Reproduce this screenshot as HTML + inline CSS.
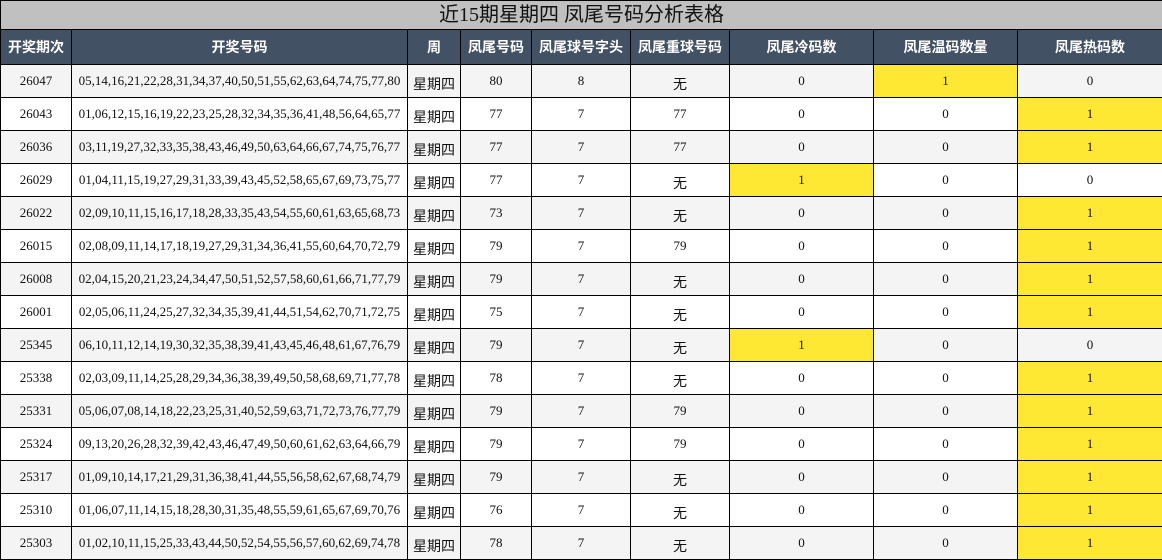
<!DOCTYPE html>
<html><head><meta charset="utf-8"><style>
html,body{margin:0;padding:0;background:#fff;}
table{border-collapse:collapse;table-layout:fixed;width:1162px;font-family:"Liberation Serif","Noto Serif CJK SC",serif;font-size:13px;color:#111;}
td,th{border:1px solid #000;text-align:center;padding:0;overflow:hidden;white-space:nowrap;line-height:16px;}
.title td{height:28px;background:#c0c0c0;font-family:"Liberation Serif","Noto Sans CJK SC",serif;font-size:20px;line-height:24px;color:#111;}
.hd th{height:34px;background:#435165;color:#fff;font-family:"Liberation Sans","Noto Sans CJK SC",sans-serif;font-size:14px;font-weight:bold;}
tr.r td{height:32px;}
tr.r:nth-child(odd) td{background:#f4f4f4;}
tr.r:nth-child(even) td{background:#fff;}
tr.r td.y{background:#ffe834;}
.cj span{font-family:"Noto Sans CJK SC",sans-serif;font-size:14px;position:relative;top:3px;}
</style></head><body>
<table>
<colgroup><col style="width:71px"><col style="width:336px"><col style="width:53px"><col style="width:71px"><col style="width:99px"><col style="width:99px"><col style="width:144px"><col style="width:144px"><col style="width:145px"></colgroup>
<tr class="title"><td colspan="9">近15期星期四 凤尾号码分析表格</td></tr>
<tr class="hd"><th>开奖期次</th><th>开奖号码</th><th>周</th><th>凤尾号码</th><th>凤尾球号字头</th><th>凤尾重球号码</th><th>凤尾冷码数</th><th>凤尾温码数量</th><th>凤尾热码数</th></tr>
<tr class="r"><td>26047</td><td>05,14,16,21,22,28,31,34,37,40,50,51,55,62,63,64,74,75,77,80</td><td class="cj"><span>星期四</span></td><td>80</td><td>8</td><td class="cj"><span>无</span></td><td>0</td><td class="y">1</td><td>0</td></tr>
<tr class="r"><td>26043</td><td>01,06,12,15,16,19,22,23,25,28,32,34,35,36,41,48,56,64,65,77</td><td class="cj"><span>星期四</span></td><td>77</td><td>7</td><td>77</td><td>0</td><td>0</td><td class="y">1</td></tr>
<tr class="r"><td>26036</td><td>03,11,19,27,32,33,35,38,43,46,49,50,63,64,66,67,74,75,76,77</td><td class="cj"><span>星期四</span></td><td>77</td><td>7</td><td>77</td><td>0</td><td>0</td><td class="y">1</td></tr>
<tr class="r"><td>26029</td><td>01,04,11,15,19,27,29,31,33,39,43,45,52,58,65,67,69,73,75,77</td><td class="cj"><span>星期四</span></td><td>77</td><td>7</td><td class="cj"><span>无</span></td><td class="y">1</td><td>0</td><td>0</td></tr>
<tr class="r"><td>26022</td><td>02,09,10,11,15,16,17,18,28,33,35,43,54,55,60,61,63,65,68,73</td><td class="cj"><span>星期四</span></td><td>73</td><td>7</td><td class="cj"><span>无</span></td><td>0</td><td>0</td><td class="y">1</td></tr>
<tr class="r"><td>26015</td><td>02,08,09,11,14,17,18,19,27,29,31,34,36,41,55,60,64,70,72,79</td><td class="cj"><span>星期四</span></td><td>79</td><td>7</td><td>79</td><td>0</td><td>0</td><td class="y">1</td></tr>
<tr class="r"><td>26008</td><td>02,04,15,20,21,23,24,34,47,50,51,52,57,58,60,61,66,71,77,79</td><td class="cj"><span>星期四</span></td><td>79</td><td>7</td><td class="cj"><span>无</span></td><td>0</td><td>0</td><td class="y">1</td></tr>
<tr class="r"><td>26001</td><td>02,05,06,11,24,25,27,32,34,35,39,41,44,51,54,62,70,71,72,75</td><td class="cj"><span>星期四</span></td><td>75</td><td>7</td><td class="cj"><span>无</span></td><td>0</td><td>0</td><td class="y">1</td></tr>
<tr class="r"><td>25345</td><td>06,10,11,12,14,19,30,32,35,38,39,41,43,45,46,48,61,67,76,79</td><td class="cj"><span>星期四</span></td><td>79</td><td>7</td><td class="cj"><span>无</span></td><td class="y">1</td><td>0</td><td>0</td></tr>
<tr class="r"><td>25338</td><td>02,03,09,11,14,25,28,29,34,36,38,39,49,50,58,68,69,71,77,78</td><td class="cj"><span>星期四</span></td><td>78</td><td>7</td><td class="cj"><span>无</span></td><td>0</td><td>0</td><td class="y">1</td></tr>
<tr class="r"><td>25331</td><td>05,06,07,08,14,18,22,23,25,31,40,52,59,63,71,72,73,76,77,79</td><td class="cj"><span>星期四</span></td><td>79</td><td>7</td><td>79</td><td>0</td><td>0</td><td class="y">1</td></tr>
<tr class="r"><td>25324</td><td>09,13,20,26,28,32,39,42,43,46,47,49,50,60,61,62,63,64,66,79</td><td class="cj"><span>星期四</span></td><td>79</td><td>7</td><td>79</td><td>0</td><td>0</td><td class="y">1</td></tr>
<tr class="r"><td>25317</td><td>01,09,10,14,17,21,29,31,36,38,41,44,55,56,58,62,67,68,74,79</td><td class="cj"><span>星期四</span></td><td>79</td><td>7</td><td class="cj"><span>无</span></td><td>0</td><td>0</td><td class="y">1</td></tr>
<tr class="r"><td>25310</td><td>01,06,07,11,14,15,18,28,30,31,35,48,55,59,61,65,67,69,70,76</td><td class="cj"><span>星期四</span></td><td>76</td><td>7</td><td class="cj"><span>无</span></td><td>0</td><td>0</td><td class="y">1</td></tr>
<tr class="r"><td>25303</td><td>01,02,10,11,15,25,33,43,44,50,52,54,55,56,57,60,62,69,74,78</td><td class="cj"><span>星期四</span></td><td>78</td><td>7</td><td class="cj"><span>无</span></td><td>0</td><td>0</td><td class="y">1</td></tr>
</table>
</body></html>
